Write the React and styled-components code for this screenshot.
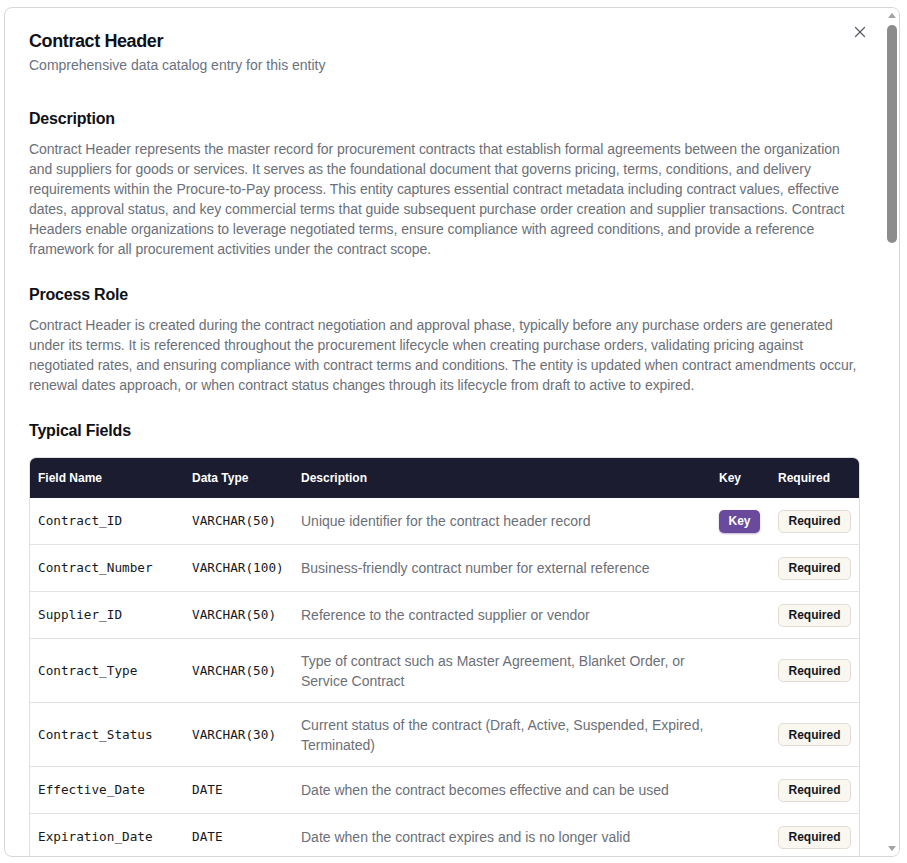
import React from 'react';
import styled, { createGlobalStyle } from 'styled-components';
import { X } from 'lucide-react';

const GlobalStyle = createGlobalStyle`
  body {
    margin: 0;
    background: #ffffff;
    font-family: "Liberation Sans", Arial, sans-serif;
  }
`;

const fields = [
  { name: 'Contract_ID', type: 'VARCHAR(50)', desc: 'Unique identifier for the contract header record', key: true },
  { name: 'Contract_Number', type: 'VARCHAR(100)', desc: 'Business-friendly contract number for external reference' },
  { name: 'Supplier_ID', type: 'VARCHAR(50)', desc: 'Reference to the contracted supplier or vendor' },
  { name: 'Contract_Type', type: 'VARCHAR(50)', desc: 'Type of contract such as Master Agreement, Blanket Order, or Service Contract' },
  { name: 'Contract_Status', type: 'VARCHAR(30)', desc: 'Current status of the contract (Draft, Active, Suspended, Expired, Terminated)' },
  { name: 'Effective_Date', type: 'DATE', desc: 'Date when the contract becomes effective and can be used' },
  { name: 'Expiration_Date', type: 'DATE', desc: 'Date when the contract expires and is no longer valid' },
  { name: 'Total_Value', type: 'DECIMAL(18,2)', desc: 'Total committed value of the contract' },
  { name: 'Currency_Code', type: 'VARCHAR(3)', desc: 'Currency in which contract values are denominated' },
];

const App = () => {
  return (
    <>
      <GlobalStyle />
      <Modal>
        <Body>
          <CloseButton aria-label="Close">
            <X size={18} strokeWidth={1.6} />
          </CloseButton>
          <Title>Contract Header</Title>
          <Subtitle>Comprehensive data catalog entry for this entity</Subtitle>

          <Section>
            <SectionTitle>Description</SectionTitle>
            <Paragraph>
              Contract Header represents the master record for procurement contracts that establish formal agreements between the organization
              and suppliers for goods or services. It serves as the foundational document that governs pricing, terms, conditions, and delivery
              requirements within the Procure-to-Pay process. This entity captures essential contract metadata including contract values, effective
              dates, approval status, and key commercial terms that guide subsequent purchase order creation and supplier transactions. Contract
              Headers enable organizations to leverage negotiated terms, ensure compliance with agreed conditions, and provide a reference
              framework for all procurement activities under the contract scope.
            </Paragraph>
          </Section>

          <Section>
            <SectionTitle>Process Role</SectionTitle>
            <Paragraph>
              Contract Header is created during the contract negotiation and approval phase, typically before any purchase orders are generated
              under its terms. It is referenced throughout the procurement lifecycle when creating purchase orders, validating pricing against
              negotiated rates, and ensuring compliance with contract terms and conditions. The entity is updated when contract amendments occur,
              renewal dates approach, or when contract status changes through its lifecycle from draft to active to expired.
            </Paragraph>
          </Section>

          <Section>
            <SectionTitle>Typical Fields</SectionTitle>
            <TableWrap>
              <Table>
                <colgroup>
                  <col style={{ width: 154 }} />
                  <col style={{ width: 109 }} />
                  <col style={{ width: 418 }} />
                  <col style={{ width: 59 }} />
                  <col style={{ width: 91 }} />
                </colgroup>
                <thead>
                  <tr>
                    <Th>Field Name</Th>
                    <Th>Data Type</Th>
                    <Th>Description</Th>
                    <Th>Key</Th>
                    <Th>Required</Th>
                  </tr>
                </thead>
                <tbody>
                  {fields.map(f => (
                    <Row key={f.name}>
                      <MonoCell>{f.name}</MonoCell>
                      <MonoCell>{f.type}</MonoCell>
                      <DescCell>{f.desc}</DescCell>
                      <Td>{f.key && <KeyBadge>Key</KeyBadge>}</Td>
                      <Td><RequiredBadge>Required</RequiredBadge></Td>
                    </Row>
                  ))}
                </tbody>
              </Table>
            </TableWrap>
          </Section>
        </Body>

        {/* the modal's scrollbar, drawn so it shows in the screenshot */}
        <ScrollRail>
          <ScrollArrow $dir="up" />
          <ScrollThumb />
          <ScrollArrow $dir="down" />
        </ScrollRail>
      </Modal>
    </>
  );
};

const Modal = styled.div`
  display: flex;
  box-sizing: border-box;
  width: 896px;
  height: 850px;
  margin: 7px 0 0 4px;
  border: 1px solid #d6d6d6;
  border-radius: 8px;
  background: #ffffff;
  overflow: hidden;
`;

const Body = styled.div`
  position: relative;
  flex: 1;
  min-width: 0;
  padding: 22px 24px 24px 24px;
  overflow-y: auto;
  scrollbar-width: none;
  &::-webkit-scrollbar { display: none; }
`;

const ScrollRail = styled.div`
  display: flex;
  flex-direction: column;
  align-items: center;
  flex-shrink: 0;
  width: 15px;
  background: #ffffff;
`;

const ScrollArrow = styled.div`
  display: flex;
  align-items: center;
  justify-content: center;
  width: 15px;
  height: 15px;
  margin-top: ${props => (props.$dir === 'down' ? 'auto' : '0')};

  &::before {
    content: '';
    width: 0;
    height: 0;
    border-left: 4.5px solid transparent;
    border-right: 4.5px solid transparent;
    ${props => (props.$dir === 'up'
      ? 'border-bottom: 5px solid #a3a3a3;'
      : 'border-top: 5px solid #a3a3a3;')}
  }
`;

const ScrollThumb = styled.div`
  width: 10px;
  height: 218px;
  margin-top: 2px;
  border-radius: 5px;
  background: #8c8c8c;
`;

const CloseButton = styled.button`
  position: absolute;
  top: 15px;
  right: 15px;
  display: flex;
  align-items: center;
  justify-content: center;
  width: 18px;
  height: 18px;
  padding: 0;
  border: none;
  background: transparent;
  color: #555a63;
  cursor: pointer;
`;

const Title = styled.h2`
  margin: 0;
  font-size: 18px;
  line-height: 22px;
  font-weight: 700;
  color: #0f1117;
  letter-spacing: -0.4px;
`;

const Subtitle = styled.p`
  margin: 3px 0 0;
  font-size: 14px;
  line-height: 20px;
  color: #6b7280;
`;

const Section = styled.section`
  margin-top: 32px;

  & + & {
    margin-top: 24px;
  }
`;

const SectionTitle = styled.h3`
  margin: 0 0 8px;
  font-size: 16px;
  line-height: 24px;
  font-weight: 700;
  color: #0f1117;
  letter-spacing: -0.2px;
`;

const Paragraph = styled.p`
  margin: 0;
  font-size: 14px;
  line-height: 20px;
  letter-spacing: -0.05px;
  color: #6b6f78;
`;

const TableWrap = styled.div`
  margin-top: 14px;
  border: 1px solid #dedfe3;
  border-radius: 7px;
  overflow: hidden;
`;

const Table = styled.table`
  width: 100%;
  table-layout: fixed;
  border-collapse: collapse;
`;

const Th = styled.th`
  height: 40px;
  padding: 0 8px;
  background: #1b1c2f;
  color: #ffffff;
  font-size: 12px;
  font-weight: 700;
  text-align: left;
  white-space: nowrap;
`;

const Row = styled.tr`
  border-top: 1px solid #e2e3e6;
  &:first-child { border-top: none; }
`;

const Td = styled.td`
  padding: 11.5px 8px;
  vertical-align: middle;
  font-size: 14px;
  line-height: 20px;
`;

const MonoCell = styled(Td)`
  font-family: "DejaVu Sans Mono", "Liberation Mono", monospace;
  font-size: 12.7px;
  color: #161821;
  white-space: nowrap;
`;

const DescCell = styled(Td)`
  padding-right: 0;
  color: #6b6f78;
`;

const Badge = styled.span`
  display: inline-flex;
  align-items: center;
  box-sizing: border-box;
  height: 23px;
  padding: 0 9.5px;
  border-radius: 5px;
  font-size: 12px;
  font-weight: 700;
  white-space: nowrap;
`;

const KeyBadge = styled(Badge)`
  background: #6a4a9c;
  color: #ffffff;
  box-shadow: 0 1px 2px rgba(60, 30, 100, 0.35);
`;

const RequiredBadge = styled(Badge)`
  background: #faf6f0;
  color: #14161d;
  border: 1px solid #e1ddd6;
`;

export default App;
